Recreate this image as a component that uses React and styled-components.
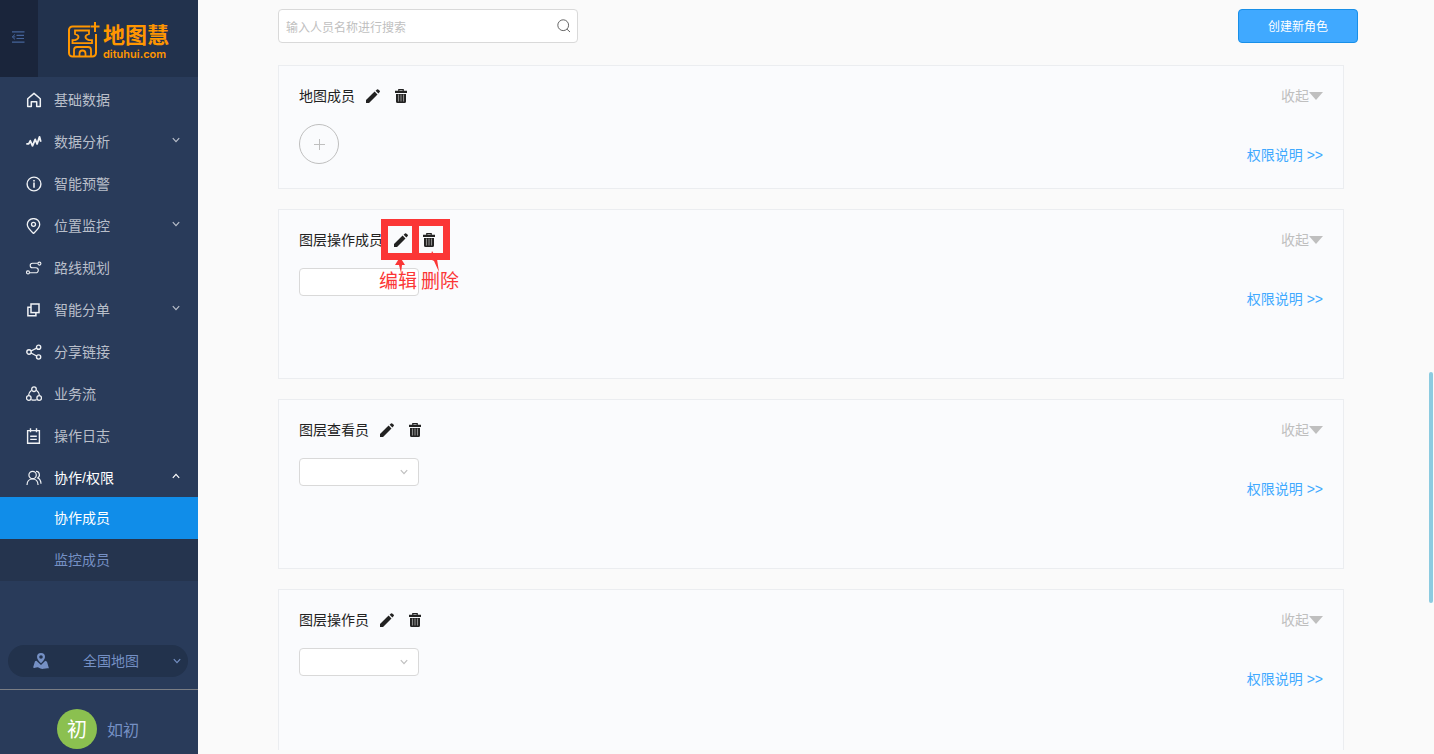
import styled, { createGlobalStyle } from "styled-components";

const GlobalStyle = createGlobalStyle`
	* {
		box-sizing: border-box;
	}

	body {
		margin: 0;
		overflow: hidden;
		font-family: "Liberation Sans", "Noto Sans CJK SC", sans-serif;
		font-size: 14px;
		line-height: 20px;
		color: #222;
		background-color: #fafafa;
	}

	button, input, select {
		font-family: inherit;
		font-size: inherit;
		line-height: inherit;
	}

	button {
		padding: 0;
		border: none;
		background: none;
		cursor: pointer;
	}

	a {
		text-decoration: none;
	}
`;

// Icons
const LineIcon = ({ size = 16, width = 1.3, children, ...rest }) => (
	<svg
		width={size}
		height={size}
		viewBox="0 0 16 16"
		fill="none"
		stroke="currentColor"
		strokeWidth={width}
		aria-hidden="true"
		{...rest}
	>
		{children}
	</svg>
);

const HomeIcon = () => (
	<LineIcon width={1.5}>
		<path d="M1.700 6.800 8 1.400l6.300 5.400v7.700h-3.600V9.800H5.300v4.700H1.700z" strokeLinejoin="round" />
	</LineIcon>
);

const AnalysisIcon = () => (
	<LineIcon width={1.8}>
		<path d="M.3 9.800h2.400l1.600-3 2.200 5 2.700-6.400 1.900 4.600 2.400-7.200 1.300 5" strokeLinejoin="round" />
	</LineIcon>
);

const InfoIcon = () => (
	<LineIcon width={1.4}>
		<circle cx="8" cy="8" r="6.9" />
		<path d="M8 6.6v5.2M8 3.9v1.5" strokeWidth="1.6" />
	</LineIcon>
);

const PinIcon = () => (
	<LineIcon>
		<path d="M7.500 15.600C4 12 1.300 9.600 1.300 6.500a6.200 5.900 0 0 1 12.400 0c0 3.100-2.700 5.500-6.200 9.100z" />
		<circle cx="7.500" cy="6.300" r="2" />
	</LineIcon>
);

const RouteIcon = () => (
	<LineIcon width={1.1}>
		<circle cx="2" cy="12.400" r="1.500" />
		<circle cx="13.400" cy="3.600" r="1.500" />
		<path d="M3.600 12.800h6.200a2.500 2.500 0 0 0 0-5H6.500a2.200 2.200 0 0 1 0-4.600h5.200" />
	</LineIcon>
);

const CopyIcon = () => (
	<LineIcon width={1.5}>
		<rect x="5" y="2" width="8" height="8.600" />
		<path d="M5 5.300H1.900v8.400h8v-3" />
	</LineIcon>
);

const ShareIcon = () => (
	<LineIcon width={1.4}>
		<circle cx="3" cy="8" r="2.200" />
		<circle cx="12.600" cy="3.200" r="2.100" />
		<circle cx="12.600" cy="13" r="2.100" />
		<path d="m5 7 5.700-2.900M5 9l5.700 3" />
	</LineIcon>
);

const FlowIcon = () => (
	<LineIcon>
		<circle cx="8" cy="3.200" r="2.300" />
		<circle cx="2.800" cy="12" r="2.300" />
		<circle cx="13.200" cy="12" r="2.300" />
		<path d="M5.600 4.300C4 5.400 2.700 7 2.600 9.400M10.400 4.300c1.600 1.100 2.900 2.700 3 5.100M5.400 13.600c1.800.8 3.400.8 5.200 0" />
	</LineIcon>
);

const LogIcon = () => (
	<LineIcon width={1.4}>
		<path d="M1.600 2.600h11.800v12.600H1.600zM4.500.2v4M10.500.2v4M4.200 8.300h6.600M4.200 11.400h6.600" />
	</LineIcon>
);

const PeopleIcon = () => (
	<LineIcon width={1.200}>
		<circle cx="6.600" cy="5" r="3.700" />
		<path d="M1 15c.1-3.600 2.200-6 5.600-6s5.300 2.400 5.500 6M10 1.400c3.600-.2 4.600 4.600 1.700 6.500 2 .9 3.200 3 3.300 5.900" />
	</LineIcon>
);

const MapIcon = () => (
	<svg width="16" height="16" viewBox="0 0 16 16" fill="currentColor" aria-hidden="true">
		<path
			fillRule="evenodd"
			d="M8 0a4 4 0 0 0-4 4c0 2.400 2.500 4.600 4 6.200C9.500 8.600 12 6.400 12 4a4 4 0 0 0-4-4zm0 2.200a1.800 1.800 0 1 1 0 3.600 1.800 1.800 0 0 1 0-3.600z"
		/>
		<path d="M3.400 7.800 2 8.300.1 14.600c1.800.9 3.600-.7 5.300-.2 1.800.5 3 2 5.200 1.400 1.900-.5 3.400-.9 5.300-.5L14 8.800l-1.700-1L8 12z" />
	</svg>
);

const CollapseIcon = () => (
	<svg width="14" height="12" viewBox="0 0 14 12" fill="none" stroke="currentColor" aria-hidden="true">
		<path d="M1 .8h12.500M5.500 4.300h7.500M5.500 7.500h7.500M1 11.200h12.500" strokeWidth="1.200" />
		<path d="M4 3.400 1.300 5.900 4 8.400M1.300 5.900h3" />
	</svg>
);

const Chevron = ({ up }) => (
	<svg width="8" height="6" viewBox="0 0 8 6" fill="none" stroke="currentColor" strokeWidth="1.200" aria-hidden="true">
		<path d={up ? "M.8 4.800 4 1.400l3.200 3.400" : "M.8 1.200 4 4.600l3.200-3.400"} />
	</svg>
);

const PencilIcon = () => (
	<svg width="14" height="14" viewBox="0 0 14 14" fill="currentColor" aria-hidden="true">
		<path d="M0 14v-3l8.600-8.400 2.900 2.900L3 14zM9.600 1.700 11 .4q.6-.5 1.200 0l1.500 1.400q.5.600 0 1.200l-1.300 1.400z" />
	</svg>
);

const TrashIcon = () => (
	<svg width="14" height="14" viewBox="0 0 14 14" aria-hidden="true">
		<path d="M4.800 2V.6h4.400V2" fill="none" stroke="currentColor" strokeWidth="1.200" />
		<path d="M1 1.800h12v2.200H1zM2 5h10v7.500q0 1.500-1.500 1.500h-7Q2 14 2 12.500z" fill="currentColor" />
		<path d="M4.500 5.500v7M7 5.500v7M9.500 5.500v7" stroke="#8a8a8a" strokeWidth="1.100" />
	</svg>
);

const SearchIcon = () => (
	<svg width="14" height="14" viewBox="0 0 14 14" fill="none" stroke="currentColor" aria-hidden="true">
		<circle cx="6.200" cy="6.200" r="5.400" />
		<path d="m10 10.200 3 2.800" />
	</svg>
);

const LogoMark = () => (
	<svg width="34" height="38" viewBox="0 0 34 38" fill="none" stroke="currentColor" strokeWidth="2" aria-hidden="true">
		<path d="M23 5.500H5.500a3.500 3.500 0 0 0-3.500 3.500v23a3.500 3.500 0 0 0 3.500 3.500h20a3.500 3.500 0 0 0 3.500-3.500V13" />
		<path d="M28 1v10M23.500 5.500h9" />
		<path d="M8 9.500h14v3.500q-3.500 1-3.500 3t3.500 3.200h3v3H5.500v-3H8q3.500-1.200 3.500-3.200T8 13z" strokeWidth="1.800" />
		<path d="M7 35V29q0-3 3-3h11q3 0 3 3v6M12.500 35v-2.500a3 3 0 0 1 6 0V35" strokeWidth="1.800" />
	</svg>
);

const menu = [
	{ label: "基础数据", Icon: HomeIcon },
	{ label: "数据分析", Icon: AnalysisIcon, group: true },
	{ label: "智能预警", Icon: InfoIcon },
	{ label: "位置监控", Icon: PinIcon, group: true },
	{ label: "路线规划", Icon: RouteIcon },
	{ label: "智能分单", Icon: CopyIcon, group: true },
	{ label: "分享链接", Icon: ShareIcon },
	{ label: "业务流", Icon: FlowIcon },
	{ label: "操作日志", Icon: LogIcon },
	{ label: "协作/权限", Icon: PeopleIcon, group: true, open: true },
];

const Sidebar = () => {
	return (
		<SidebarContainer>
			<SidebarHeader>
				<CollapseButton aria-label="收起菜单">
					<CollapseIcon />
				</CollapseButton>
				<Logo href="#">
					<LogoMark />
					<LogoText>
						<LogoName>地图慧</LogoName>
						<LogoDomain>dituhui.com</LogoDomain>
					</LogoText>
				</Logo>
			</SidebarHeader>
			<Menu>
				{menu.map(({ label, Icon, group, open }) => (
					<MenuItem key={label} href="#" $open={open}>
						<Icon />
						<MenuLabel>{label}</MenuLabel>
						{group && (
							<MenuArrow>
								<Chevron up={open} />
							</MenuArrow>
						)}
					</MenuItem>
				))}
				<SubItem href="#" $active>
					协作成员
				</SubItem>
				<SubItem href="#">监控成员</SubItem>
			</Menu>
			<MapSwitch>
				<MapIcon />
				<span>全国地图</span>
				<Chevron />
			</MapSwitch>
			<User>
				<Avatar>初</Avatar>
				<span>如初</span>
			</User>
		</SidebarContainer>
	);
};

const RoleCard = ({ id, name, addable, marked }) => {
	return (
		<Card>
			<CardHead>
				<CardTitle>{name}</CardTitle>
				<IconButton aria-label="编辑">
					<PencilIcon />
				</IconButton>
				<IconButton aria-label="删除">
					<TrashIcon />
				</IconButton>
				<FoldButton>
					收起
					<Triangle />
				</FoldButton>
			</CardHead>
			<CardBody $short={addable}>
				{addable ? (
					<AddButton aria-label="添加成员">
						<svg width="12" height="12" viewBox="0 0 12 12" stroke="currentColor" aria-hidden="true">
							<path d="M6.500 1v11M1 6.500h11" />
						</svg>
					</AddButton>
				) : (
					<SelectBox>
						<select id={id} aria-label={name} />
						{!marked && <Chevron />}
					</SelectBox>
				)}
				<RightsLink href="#">权限说明 &gt;&gt;</RightsLink>
			</CardBody>
			{marked && <Marks />}
		</Card>
	);
};

// Red frames and labels over the edit and delete buttons
const Marks = () => (
	<MarksLayer>
		<svg width="69" height="54" viewBox="0 0 69 54" fill="#fb3636" aria-hidden="true">
			<path fillRule="evenodd" d="M0 0h69v41H0zM7 7v27h24V7zM38 7v27h24V7z" />
			<path d="m19 38 5 8h-3l-1 8-2-8h-4zM51 32l5 8 2 13-5-11-4-2z" />
		</svg>
		<MarksText>
			<span>编辑</span>
			<span>删除</span>
		</MarksText>
	</MarksLayer>
);

const App = () => {
	return (
		<>
			<GlobalStyle />
			<Page>
				<Sidebar />
				<Main>
					<Toolbar>
						<SearchBox>
							<input type="text" placeholder="输入人员名称进行搜索" aria-label="搜索人员" />
							<button aria-label="搜索">
								<SearchIcon />
							</button>
						</SearchBox>
						<CreateButton>创建新角色</CreateButton>
					</Toolbar>
					<CardList>
						<RoleCard id="map-member" name="地图成员" addable />
						<RoleCard id="layer-operator-member" name="图层操作成员" marked />
						<RoleCard id="layer-viewer" name="图层查看员" />
						<RoleCard id="layer-operator" name="图层操作员" />
					</CardList>
				</Main>
				<ScrollThumb />
			</Page>
		</>
	);
};

const Page = styled.div`
	display: flex;
	height: 100vh;
`;

const SidebarContainer = styled.aside`
	display: flex;
	flex-direction: column;
	flex-shrink: 0;
	width: 198px;
	background-color: #293b5a;
`;

const SidebarHeader = styled.div`
	display: flex;
	height: 77px;
	background-color: #22324d;
`;

const CollapseButton = styled.button`
	display: flex;
	align-items: center;
	justify-content: center;
	width: 38px;
	padding: 0 2px 4px 0;
	color: #45649a;
	background-color: #1a253b;
`;

const Logo = styled.a`
	display: flex;
	flex: 1;
	align-items: center;
	justify-content: center;
	gap: 2px;
	padding-top: 2px;
	color: #ff9600;
`;

const LogoText = styled.span`
	display: flex;
	flex-direction: column;
	padding-top: 6px;
`;

const LogoName = styled.span`
	font-size: 22px;
	font-weight: 700;
	line-height: 22px;
`;

const LogoDomain = styled.span`
	font-family: Inter, sans-serif;
	font-size: 11px;
	font-weight: 600;
	line-height: 14px;
`;

const Menu = styled.nav`
	flex: 1;
`;

const MenuItem = styled.a`
	display: flex;
	align-items: center;
	height: 42px;
	padding: 4px 18px 0 26px;
	color: ${(props) => (props.$open ? "#fff" : "#b9bfca")};

	> svg {
		color: #f0f2f5;
	}
`;

const MenuLabel = styled.span`
	flex: 1;
	margin-left: 12px;
`;

const MenuArrow = styled.span`
	display: flex;
	padding-bottom: 4px;
`;

const SubItem = styled.a`
	display: block;
	padding-left: 54px;
	line-height: 42px;
	color: ${(props) => (props.$active ? "#fff" : "#7590c4")};
	background-color: ${(props) => (props.$active ? "#108de9" : "#25344e")};
`;

const MapSwitch = styled.button`
	display: flex;
	align-items: center;
	justify-content: space-between;
	height: 32px;
	margin: 0 10px 12px 8px;
	padding: 0 7px 0 25px;
	border-radius: 16px;
	color: #7590c4;
	background-color: #22324c;
`;

const User = styled.div`
	display: flex;
	align-items: center;
	justify-content: center;
	gap: 10px;
	padding: 19px 2px 5px 0;
	border-top: 1px solid #7a7d84;
	font-family: "Noto Sans CJK SC", sans-serif;
	font-size: 16px;
	color: #7590c4;
`;

const Avatar = styled.span`
	width: 40px;
	border-radius: 50%;
	font-size: 20px;
	line-height: 40px;
	text-align: center;
	color: #fff;
	background-color: #8bc050;
`;

const Main = styled.main`
	display: flex;
	flex: 1;
	flex-direction: column;
	min-width: 0;
	padding: 9px 90px 4px 80px;
`;

const Toolbar = styled.div`
	display: flex;
	justify-content: space-between;
	margin: 0 -14px 22px 0;
	font-family: "Noto Sans CJK SC", sans-serif;
	font-size: 12px;
`;

const SearchBox = styled.div`
	display: flex;
	align-items: center;
	width: 300px;
	height: 34px;
	padding: 0 6px 0 7px;
	border: 1px solid #d9d9d9;
	border-radius: 4px;
	background-color: #fff;

	> input {
		flex: 1;
		min-width: 0;
		padding: 2px 0 0;
		border: none;
		outline: none;
	}

	> input::placeholder {
		color: #bfbfbf;
	}

	> button {
		display: flex;
		color: #666;
	}
`;

const CreateButton = styled.button`
	width: 120px;
	height: 34px;
	border: 1px solid #188fe8;
	border-radius: 4px;
	color: #fff;
	background-color: #40a9ff;
`;

const CardList = styled.div`
	flex: 1;
	min-height: 0;
	overflow: hidden;
`;

const Card = styled.section`
	position: relative;
	margin-bottom: 20px;
	padding: 20px;
	border: 1px solid #ebedf0;
	background-color: #fafbfd;
`;

const CardHead = styled.div`
	display: flex;
	align-items: center;
	gap: 14px;
	margin-bottom: 18px;
`;

const CardTitle = styled.h2`
	margin: 0 -3px 0 0;
	font-size: 14px;
	font-weight: 400;
	line-height: 20px;
`;

const IconButton = styled.button`
	display: flex;
	color: #222;
`;

const FoldButton = styled.button`
	display: flex;
	align-items: center;
	margin-left: auto;
	color: #bfbfbf;
`;

const Triangle = styled.span`
	border: 7px solid transparent;
	border-top: 8px solid #bfbfbf;
	border-bottom: none;
`;

const CardBody = styled.div`
	display: flex;
	align-items: flex-start;
	justify-content: space-between;
	min-height: ${(props) => (props.$short ? "44px" : "90px")};
`;

const AddButton = styled.button`
	display: flex;
	align-items: center;
	justify-content: center;
	width: 40px;
	height: 40px;
	border: 1px solid #bfbfbf;
	border-radius: 50%;
	color: #bfbfbf;
`;

const SelectBox = styled.div`
	display: flex;
	position: relative;
	width: 120px;
	height: 28px;
	color: #bfbfbf;

	> select {
		width: 100%;
		appearance: none;
		border: 1px solid #d9d9d9;
		border-radius: 4px;
		background-color: #fff;
	}

	> svg {
		position: absolute;
		top: 11px;
		right: 11px;
	}
`;

const RightsLink = styled.a`
	margin-top: 21px;
	color: #40a9ff;
`;

const MarksLayer = styled.div`
	position: absolute;
	top: 9px;
	left: 102px;
	pointer-events: none;

	> svg {
		display: block;
	}
`;

const MarksText = styled.div`
	display: flex;
	gap: 4px;
	margin: -1px 0 0 -2px;
	font-size: 19px;
	color: #fb3636;
	white-space: nowrap;
`;

const ScrollThumb = styled.div`
	position: fixed;
	top: 372px;
	right: 1px;
	width: 4px;
	height: 231px;
	border-radius: 2px;
	background-color: #8ccbe0;
`;

export default App;
